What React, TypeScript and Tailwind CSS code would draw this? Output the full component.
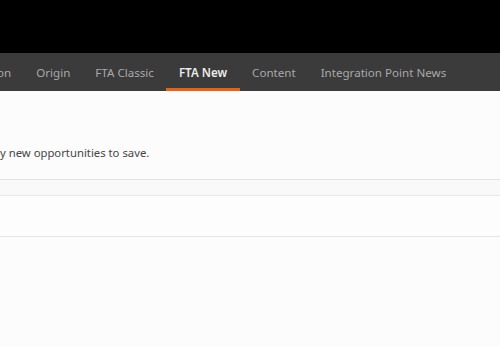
const tabs = ['on', 'Origin', 'FTA Classic', 'FTA New', 'Content', 'Integration Point News'];

export default function App() {
  return (
    <div className="w-[500px] h-[346px] overflow-hidden bg-[#fcfcfc] font-['Noto_Sans',sans-serif]">
      <div className="h-[53px] bg-black" />
      <nav className="h-[38px] bg-[#3b3b3b] flex items-stretch pl-0 -ml-[3px]">
        {tabs.map((t, i) => {
          const active = t === 'FTA New';
          return (
            <div
              key={t}
              className={`flex items-center text-[11.6px] whitespace-nowrap border-b-[3px] pt-[4px] ${
                i === 0 ? 'pr-[12.5px]' : 'px-[12.5px]'
              } ${active ? 'border-[#e8620f] text-[#ececec] font-semibold' : 'border-transparent text-[#a9a9a9]'}`}
            >
              {t}
            </div>
          );
        })}
      </nav>
      <div className="pt-[54px]">
        <p className="text-[11.3px] leading-[16px] text-[#454545] whitespace-nowrap">y new opportunities to save.</p>
      </div>
      <div className="mt-[18px] h-[16px] border-t border-[#e2e2e2] bg-[#f9f9f9]" />
      <div className="h-[42px] border-t border-[#e6e6e6] border-b bg-[#fdfdfd]" />
    </div>
  );
}
